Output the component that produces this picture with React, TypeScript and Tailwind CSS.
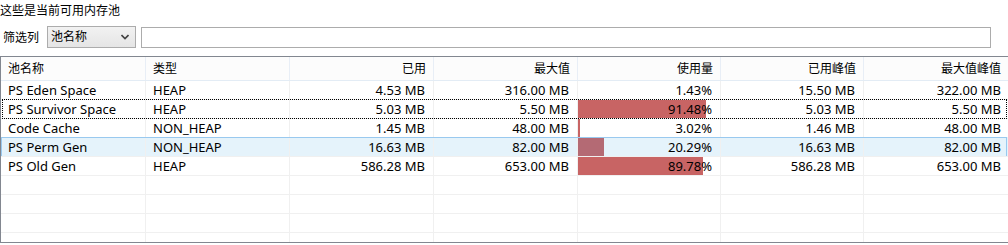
import React from "react";

type Row = {
  name: string;
  type: string;
  used: string;
  max: string;
  pct: string;
  bar: number;
  peakUsed: string;
  peakMax: string;
};

const rows: Row[] = [
  { name: "PS Eden Space", type: "HEAP", used: "4.53 MB", max: "316.00 MB", pct: "1.43%", bar: 0, peakUsed: "15.50 MB", peakMax: "322.00 MB" },
  { name: "PS Survivor Space", type: "HEAP", used: "5.03 MB", max: "5.50 MB", pct: "91.48%", bar: 128, peakUsed: "5.03 MB", peakMax: "5.50 MB" },
  { name: "Code Cache", type: "NON_HEAP", used: "1.45 MB", max: "48.00 MB", pct: "3.02%", bar: 2, peakUsed: "1.46 MB", peakMax: "48.00 MB" },
  { name: "PS Perm Gen", type: "NON_HEAP", used: "16.63 MB", max: "82.00 MB", pct: "20.29%", bar: 26, peakUsed: "16.63 MB", peakMax: "82.00 MB" },
  { name: "PS Old Gen", type: "HEAP", used: "586.28 MB", max: "653.00 MB", pct: "89.78%", bar: 125, peakUsed: "586.28 MB", peakMax: "653.00 MB" },
];

const headers = ["池名称", "类型", "已用", "最大值", "使用量", "已用峰值", "最大值峰值"];
const gridCols = "grid grid-cols-[145px_144px_144px_144px_143px_143px_145px]";

function Cell({ children, right, last }: { children?: React.ReactNode; right?: boolean; last?: boolean }) {
  return (
    <div
      className={
        "relative flex h-full items-center overflow-hidden whitespace-nowrap pt-[2px] " +
        (last ? "" : "border-r border-[#f0f0f0] ") +
        (right ? "justify-end pr-[8px]" : "pl-[7px]")
      }
    >
      {children}
    </div>
  );
}

export default function App() {
  return (
    <div
      className="w-[1008px] h-[245px] overflow-hidden bg-white text-[12px] text-black"
      style={{ fontFamily: '"Noto Sans", "Noto Sans CJK SC", sans-serif' }}
    >
      <div className="h-[26px] pt-[2px] leading-[18px]">这些是当前可用内存池</div>
      <div className="flex h-[22px] items-center">
        <div className="w-[47px] pl-[3px] pt-[1px]">筛选列</div>
        <div className="flex h-[22px] w-[89px] items-center justify-between border border-[#acacac] bg-gradient-to-b from-[#f2f2f2] to-[#e5e5e5] pl-[3px] pr-[6px]">
          <span>池名称</span>
          <svg width="8" height="6" viewBox="0 0 8 6">
            <path d="M0.5 1 L4 4.5 L7.5 1" fill="none" stroke="#404040" strokeWidth="1.6" />
          </svg>
        </div>
        <div className="ml-[5px] h-[21px] w-[850px] border border-[#acacac] bg-white" />
      </div>
      <div className="mt-[8px] h-[187px] w-[1010px] overflow-hidden border border-[#828790] bg-white">
        <div className={gridCols + " h-[24px] border-b border-[#e3ecf5] bg-[#fcfcfc]"}>
          {headers.map((h, i) => (
            <div
              key={h}
              className={
                "flex h-full items-center whitespace-nowrap border-r border-[#e8eef6] pt-[1px] " +
                (i < 2 ? "pl-[7px]" : "justify-end pr-[7px]")
              }
            >
              {h}
            </div>
          ))}
        </div>
        <div className="text-[13px]">
          {rows.map((r, idx) => {
            const selected = idx === 3;
            const focused = idx === 1;
            return (
              <div key={r.name} className="relative h-[19px] border-b border-[#f0f0f0]">
                <div className={gridCols + " h-full " + (selected ? "bg-[#e5f3fb]" : "")}>
                  <Cell>{r.name}</Cell>
                  <Cell>{r.type}</Cell>
                  <Cell right>{r.used}</Cell>
                  <Cell right>{r.max}</Cell>
                  <Cell right>
                    {r.bar > 0 && (
                      <div
                        className={"absolute left-0 top-0 h-full " + (selected ? "bg-[#b46a74]" : "bg-[#c86464]")}
                        style={{ width: r.bar }}
                      />
                    )}
                    <span className="relative">{r.pct}</span>
                  </Cell>
                  <Cell right>{r.peakUsed}</Cell>
                  <Cell right last>{r.peakMax}</Cell>
                </div>
                {selected && (
                  <div className="pointer-events-none absolute left-0 top-[-1px] h-[19px] w-[1006px] border-l border-r border-t border-[#99c9ef]" />
                )}
                {focused && (
                  <div className="pointer-events-none absolute left-[1px] top-[-1px] h-[20px] w-[1005px] border border-dotted border-black" />
                )}
              </div>
            );
          })}
          {[0, 1, 2, 3].map((i) => (
            <div key={i} className={gridCols + " h-[19px] border-b border-[#f0f0f0]"}>
              {[0, 1, 2, 3, 4, 5, 6].map((j) => (
                <Cell key={j} last={j === 6} />
              ))}
            </div>
          ))}
        </div>
      </div>
    </div>
  );
}
